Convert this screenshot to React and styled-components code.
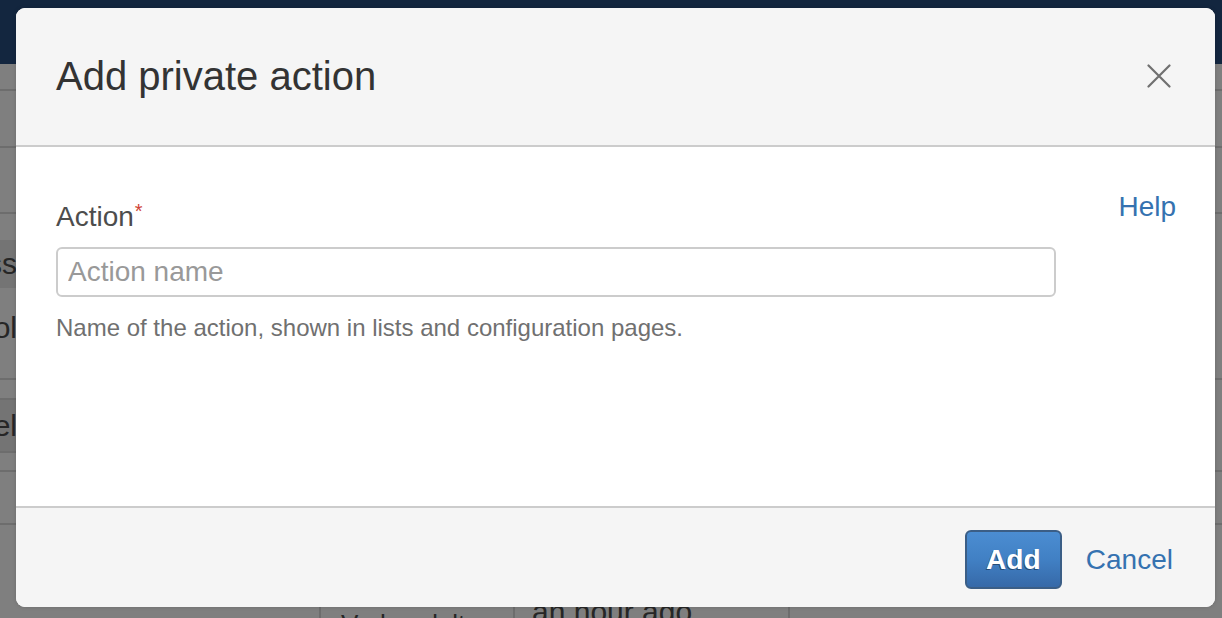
import React from "react";
import styled, { createGlobalStyle } from "styled-components";

const Global = createGlobalStyle`
  html, body { margin: 0; padding: 0; }
  body {
    width: 1222px;
    height: 618px;
    overflow: hidden;
    font-family: "Liberation Sans", Arial, Helvetica, sans-serif;
    background: #7f7f7f;
  }
  * { box-sizing: border-box; }
`;

const Page = styled.div`
  position: relative;
  width: 1222px;
  height: 618px;
  overflow: hidden;
  background: #7f7f7f;
`;

/* ---------- dimmed page behind the dialog ---------- */
const Nav = styled.div`
  height: 64px;
  background: #13263f;
`;

const Row = styled.div`
  display: flex;
  height: ${(p) => p.$h}px;
  border-bottom: ${(p) => (p.$noLine ? "none" : "2px solid #6d6d6d")};
`;

const LeftCell = styled.div`
  width: 17px;
  flex: none;
  display: flex;
  flex-direction: column;
  overflow: hidden;
`;

const Band = styled.div`
  height: ${(p) => p.$h}px;
  flex: none;
  display: flex;
  align-items: center;
  justify-content: flex-end;
  background: ${(p) => (p.$dark ? "#747474" : "transparent")};
  border-bottom: ${(p) => (p.$line ? "2px solid #6d6d6d" : "none")};
  font-size: 30px;
  color: #262626;
  white-space: nowrap;
`;

const Column = styled.div`
  width: ${(p) => p.$w}px;
  flex: none;
  border-right: 2px solid #6d6d6d;
  display: flex;
  align-items: flex-start;
  padding-left: ${(p) => p.$pad || 0}px;
  padding-top: ${(p) => p.$top || 70}px;
  overflow: hidden;
`;

const CellText = styled.div`
  font-size: ${(p) => p.$size || 30}px;
  color: #262626;
  white-space: nowrap;
`;

/* ---------- dialog ---------- */
const Dialog = styled.div`
  position: absolute;
  left: 16px;
  top: 8px;
  width: 1199px;
  height: 599px;
  border-radius: 9px;
  overflow: hidden;
  display: flex;
  flex-direction: column;
  background: #fff;
  box-shadow: 0 0 4px rgba(0, 0, 0, 0.15);
`;

const Header = styled.header`
  height: 139px;
  flex: none;
  display: flex;
  align-items: center;
  justify-content: space-between;
  padding: 0 44px 2px 40px;
  background: #f5f5f5;
  border-bottom: 2px solid #cccccc;
`;

const Title = styled.h2`
  margin: 0;
  font-size: 40px;
  line-height: 40px;
  font-weight: normal;
  color: #333333;
`;

const CloseButton = styled.button`
  width: 24px;
  height: 24px;
  padding: 0;
  border: 0;
  background: none;
  display: flex;
  align-items: center;
  justify-content: center;
  cursor: pointer;
`;

const Body = styled.div`
  flex: 1;
  padding: 40px 39px 0 40px;
  display: flex;
  justify-content: space-between;
  align-items: flex-start;
  background: #ffffff;
`;

const Field = styled.div`
  width: 1000px;
  padding-top: 10px;
  display: flex;
  flex-direction: column;
`;

const Label = styled.label`
  font-size: 28px;
  line-height: 40px;
  color: #4d4d4d;
`;

const Required = styled.span`
  color: #d04437;
  font-size: 20px;
  vertical-align: top;
  position: relative;
  top: -6px;
  margin-left: 1px;
`;

const Input = styled.input`
  margin-top: 10px;
  height: 50px;
  width: 1000px;
  padding: 0 10px;
  border: 2px solid #cccccc;
  border-radius: 6px;
  font-family: inherit;
  font-size: 28px;
  color: #333;
  outline: none;
  &::placeholder {
    color: #999999;
  }
`;

const Description = styled.div`
  margin-top: 15px;
  font-size: 24px;
  line-height: 32px;
  color: #707070;
`;

const Link = styled.a`
  font-size: 28px;
  line-height: 40px;
  color: #3572b0;
  text-decoration: none;
  cursor: pointer;
`;

const Footer = styled.footer`
  height: 101px;
  flex: none;
  display: flex;
  justify-content: flex-end;
  align-items: flex-start;
  gap: 24px;
  padding: 22px 42px 0 0;
  background: #f5f5f5;
  border-top: 2px solid #cccccc;
`;

const PrimaryButton = styled.button`
  height: 59px;
  width: 97px;
  padding: 0;
  border: 2px solid #3b5e86;
  border-radius: 6px;
  background: linear-gradient(to bottom, #4b8dd2 0%, #4180c4 50%, #3669a8 100%);
  color: #ffffff;
  font-family: inherit;
  font-size: 28px;
  font-weight: bold;
  text-shadow: -1px 1px 0 rgba(0, 0, 0, 0.4);
  cursor: pointer;
`;

const TextLink = styled(Link)`
  line-height: 59px;
`;

export default function App() {
  return (
    <Page>
      <Global />
      <Nav />
      <Row $h={27} />
      <Row $h={57} />
      <Row $h={66} />
      <Row $h={166}>
        <LeftCell>
          <Band $h={26} />
          <Band $h={48} $dark>Class</Band>
          <Band $h={80}>Tool</Band>
        </LeftCell>
      </Row>
      <Row $h={92}>
        <LeftCell>
          <Band $h={20} $line />
          <Band $h={53} $dark $line>Label</Band>
        </LeftCell>
      </Row>
      <Row $h={53} />
      <Row $h={100} $noLine>
        <Column $w={321} />
        <Column $w={194} $pad={20} $top={84}>
          <CellText $size={26}>Verhandelt</CellText>
        </Column>
        <Column $w={275} $pad={17}>
          <CellText>an hour ago</CellText>
        </Column>
      </Row>

      <Dialog role="dialog" aria-labelledby="dlg-title">
        <Header>
          <Title id="dlg-title">Add private action</Title>
          <CloseButton aria-label="Close">
            <svg width="24" height="24" viewBox="0 0 24 24">
              <path
                d="M1.5 1.5 L22.5 22.5 M22.5 1.5 L1.5 22.5"
                stroke="#707070"
                strokeWidth="2.2"
                strokeLinecap="round"
                fill="none"
              />
            </svg>
          </CloseButton>
        </Header>
        <Body>
          <Field>
            <Label htmlFor="action-name">
              Action<Required>*</Required>
            </Label>
            <Input id="action-name" placeholder="Action name" />
            <Description>
              Name of the action, shown in lists and configuration pages.
            </Description>
          </Field>
          <Link>Help</Link>
        </Body>
        <Footer>
          <PrimaryButton>Add</PrimaryButton>
          <TextLink>Cancel</TextLink>
        </Footer>
      </Dialog>
    </Page>
  );
}
